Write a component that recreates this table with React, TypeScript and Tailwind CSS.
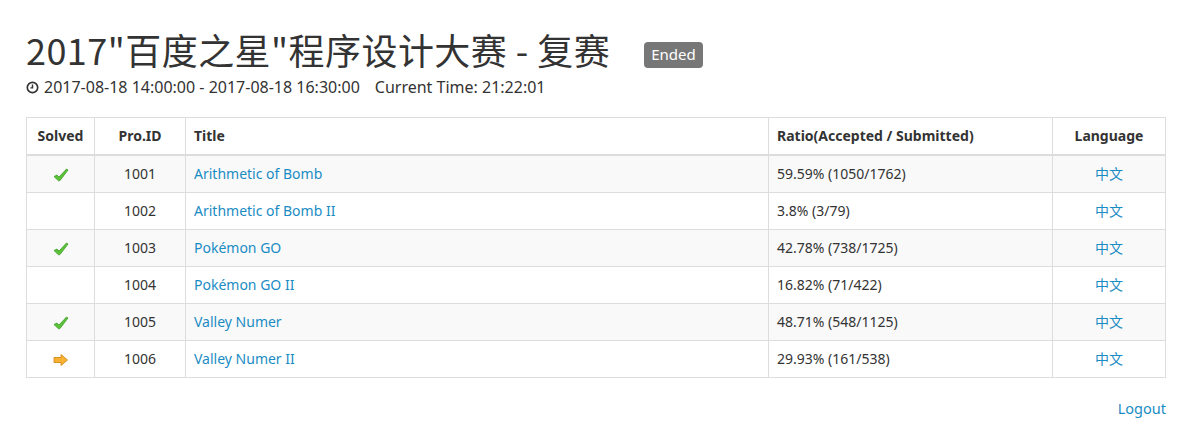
import React from "react";

const rows = [
  { s: "ok", id: "1001", t: "Arithmetic of Bomb", r: "59.59% (1050/1762)" },
  { s: "", id: "1002", t: "Arithmetic of Bomb II", r: "3.8% (3/79)" },
  { s: "ok", id: "1003", t: "Pokémon GO", r: "42.78% (738/1725)" },
  { s: "", id: "1004", t: "Pokémon GO II", r: "16.82% (71/422)" },
  { s: "ok", id: "1005", t: "Valley Numer", r: "48.71% (548/1125)" },
  { s: "try", id: "1006", t: "Valley Numer II", r: "29.93% (161/538)" },
];

function Check() {
  return (
    <svg width="16" height="14" viewBox="0 0 16 14" className="inline-block">
      <path d="M1 8.5 L4 7 L6 9 L13.5 1 L15 2 L7 12.5 L5.5 12.8 Z" fill="#5cc23a" stroke="#3e9a25" strokeWidth="0.8" strokeLinejoin="round" />
    </svg>
  );
}

function Arrow() {
  return (
    <svg width="16" height="14" viewBox="0 0 16 14" className="inline-block">
      <path d="M1 4.5 L8 4.5 L8 1.5 L14.5 7 L8 12.5 L8 9.5 L1 9.5 Z" fill="#f7b233" stroke="#d58a16" strokeWidth="0.9" strokeLinejoin="round" />
    </svg>
  );
}

export default function App() {
  const font = { fontFamily: '"Noto Sans", "Noto Sans CJK SC", sans-serif' };
  return (
    <div className="w-[1195px] h-[428px] bg-white text-[#333] text-[14px] leading-[20px]" style={font}>
      <div className="px-[26px]">
        <div className="pt-[26px] flex items-center">
          <h1 className="text-[36px] leading-[46px] font-normal tracking-[0.45px] text-[#333]" style={{ fontFamily: '"Noto Sans CJK SC", sans-serif' }}>
            2017"百度之星"程序设计大赛 - 复赛
          </h1>
          <span className="ml-[34px] mt-[11px] bg-[#777] text-white text-[15px] leading-[17px] px-[7px] pt-[4px] pb-[5px] rounded-[4px]">Ended</span>
        </div>
        <div className="mt-[5px] flex items-center text-[16px]">
          <svg width="13" height="13" viewBox="0 0 14 14" className="mr-[5px]">
            <circle cx="7" cy="7" r="5.6" fill="none" stroke="#333" strokeWidth="1.8" />
            <path d="M7 3.8 V7.4 H4.8" fill="none" stroke="#333" strokeWidth="1.6" />
          </svg>
          <span>2017-08-18 14:00:00 - 2017-08-18 16:30:00</span>
          <span className="ml-[15px]">Current Time: 21:22:01</span>
        </div>
        <table className="mt-[20px] w-[1140px] border-collapse border border-[#ddd]">
          <thead>
            <tr className="border-b-2 border-[#ddd] font-bold">
              <th className="w-[68px] border border-[#ddd] px-[8px] py-[8px] text-center">Solved</th>
              <th className="w-[91px] border border-[#ddd] px-[8px] py-[8px] text-center">Pro.ID</th>
              <th className="w-[583px] border border-[#ddd] px-[8px] py-[8px] text-left">Title</th>
              <th className="w-[284px] border border-[#ddd] px-[8px] py-[8px] text-left">Ratio(Accepted / Submitted)</th>
              <th className="border border-[#ddd] px-[8px] py-[8px] text-center">Language</th>
            </tr>
          </thead>
          <tbody>
            {rows.map((r, i) => (
              <tr key={r.id} className={i % 2 === 0 ? "bg-[#f9f9f9]" : "bg-white"}>
                <td className="border border-[#ddd] px-[8px] py-[8px] text-center h-[37px]">
                  {r.s === "ok" ? <Check /> : r.s === "try" ? <Arrow /> : null}
                </td>
                <td className="border border-[#ddd] px-[8px] py-[8px] text-center">{r.id}</td>
                <td className="border border-[#ddd] px-[8px] py-[8px] text-[#1a8cc4]">{r.t}</td>
                <td className="border border-[#ddd] px-[8px] py-[8px]">{r.r}</td>
                <td className="border border-[#ddd] px-[8px] py-[8px] text-center text-[#1a8cc4]">中文</td>
              </tr>
            ))}
          </tbody>
        </table>
        <div className="mt-[20px] w-[1140px] text-right text-[#1a8cc4] text-[14.5px]">Logout</div>
      </div>
    </div>
  );
}
